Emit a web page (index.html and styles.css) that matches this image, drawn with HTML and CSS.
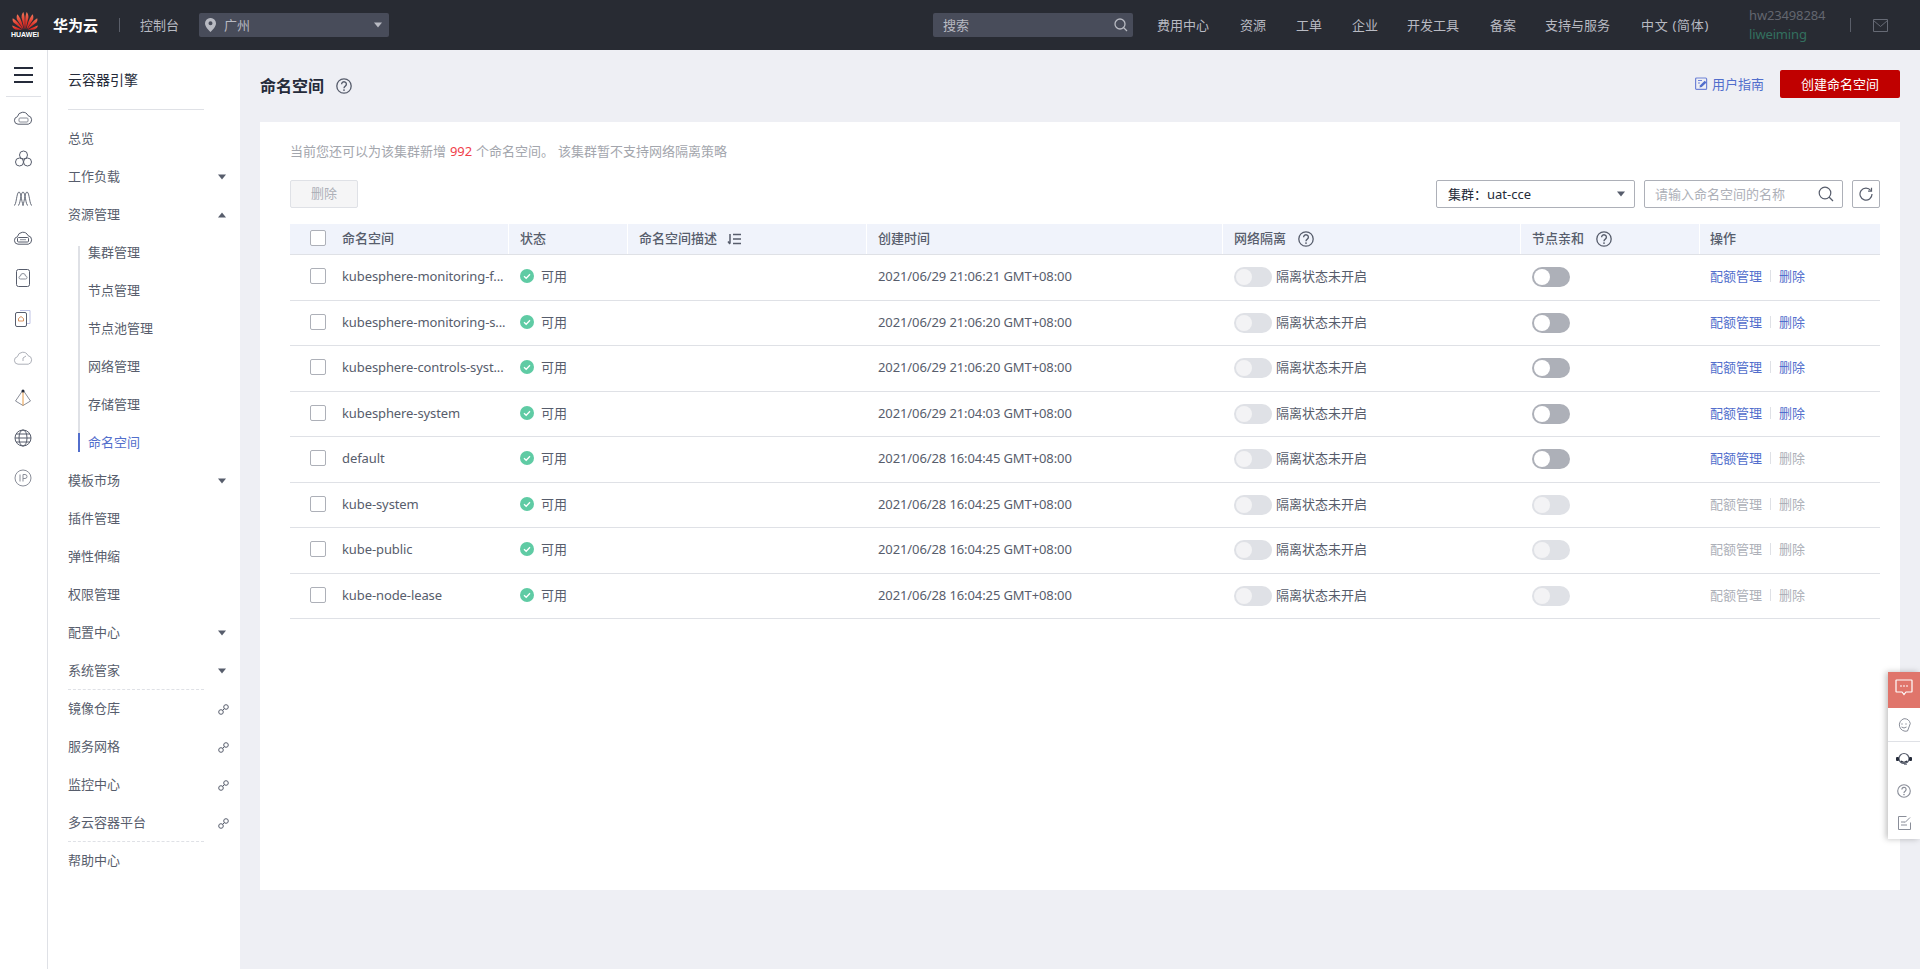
FILE: index.html
```html
<!DOCTYPE html>
<html lang="zh-CN">
<head>
<meta charset="utf-8">
<title>命名空间</title>
<link rel="stylesheet" href="styles.css">
</head>
<body>
<svg class="defs" width="0" height="0" aria-hidden="true">
  <defs>
    <linearGradient id="petal" x1="0" y1="0" x2="0" y2="1">
      <stop offset="0" stop-color="#f0785a"/>
      <stop offset=".55" stop-color="#e0352b"/>
      <stop offset="1" stop-color="#d8201f"/>
    </linearGradient>
  </defs>
  <symbol id="caret" viewBox="0 0 8 6"><path d="M0 .5h8L4 5.500z" fill="currentColor"/></symbol>
  <symbol id="help" viewBox="0 0 16 16"><circle cx="8" cy="8" r="7.200" fill="none" stroke="currentColor" stroke-width="1.300"/><path d="M5.600 6.200a2.400 2.400 0 1 1 3.700 2c-.9.600-1.300 1-1.300 2" fill="none" stroke="currentColor" stroke-width="1.400"/><circle cx="8" cy="12.100" r=".9" fill="currentColor"/></symbol>
  <symbol id="ok" viewBox="0 0 14 14"><circle cx="7" cy="7" r="7" fill="#5fcba4"/><path d="M4 7.200l2.200 2.100L10 5.300" fill="none" stroke="#fff" stroke-width="1.300"/></symbol>
  <symbol id="link" viewBox="0 0 11 11"><circle cx="3" cy="8" r="2.300" fill="none" stroke="currentColor"/><circle cx="8" cy="3" r="2.300" fill="none" stroke="currentColor"/><path d="M4.500 6.500l2-2" stroke="currentColor"/></symbol>
  <symbol id="cloud" viewBox="0 0 20 14"><path d="M5 13.200a3.800 3.800 0 0 1-.6-7.500A5.600 5.600 0 0 1 15 4.600a4.400 4.400 0 0 1 .3 8.600z" fill="none" stroke="currentColor"/></symbol>
</svg>

<header class="topbar">
  <div class="brand">
    <div class="logo">
      <svg width="26" height="18" viewBox="0 0 26 18" aria-hidden="true">
        <g fill="url(#petal)">
          <path d="M12.400 17.500 9.600 5.500C9.400 3 10.400 1.300 11.300 0c1.300 2.500 1.900 9.500 1.100 17.500z"/>
          <path d="M13.600 17.500 16.400 5.500C16.600 3 15.600 1.300 14.700 0c-1.300 2.500-1.900 9.500-1.100 17.500z"/>
          <path d="M11.500 17.500 5 7.500C4.300 5.500 4.700 3.500 5.400 2.300 7.500 4.500 10.700 11 11.500 17.500z"/>
          <path d="M14.500 17.500 21 7.500C21.700 5.500 21.300 3.500 20.600 2.300 18.500 4.500 15.300 11 14.500 17.500z"/>
          <path d="M10.700 17.500 1.500 10.500C.4 9 .4 7.500.8 6.300 3.500 8 8.700 13 10.700 17.500z"/>
          <path d="M15.300 17.500 24.500 10.500C25.600 9 25.600 7.500 25.200 6.300 22.500 8 17.300 13 15.300 17.500z"/>
          <path d="M10.200 17.800 .4 13.400C-.1 14.800 1.400 16.800 3.500 17.400 5.500 17.900 8 17.900 10.200 17.800z"/>
          <path d="M15.800 17.800 25.600 13.400C26.100 14.800 24.600 16.800 22.500 17.400 20.500 17.900 18 17.900 15.800 17.800z"/>
        </g>
      </svg>
      <span class="logo-text">HUAWEI</span>
    </div>
    <span class="brand-name">华为云</span>
    <span class="brand-sep"></span>
    <span class="console">控制台</span>
    <div class="region">
      <svg width="11" height="14" viewBox="0 0 11 14" aria-hidden="true"><path fill-rule="evenodd" d="M5.500 0A5.300 5.300 0 0 1 11 5.200C11 8.500 7.500 12 5.500 14 3.500 12 0 8.500 0 5.200A5.300 5.300 0 0 1 5.500 0zm0 3.300a2 2 0 1 0 0 4 2 2 0 0 0 0-4z" fill="#b8bac2"/></svg>
      <span class="region-name">广州</span>
      <svg class="caret region-caret"><use href="#caret"/></svg>
    </div>
  </div>
  <div class="top-right">
    <div class="top-search">
      <span>搜索</span>
      <svg width="14" height="14" viewBox="0 0 14 14" aria-hidden="true"><circle cx="6" cy="6" r="5" fill="none" stroke="#b8bac2" stroke-width="1.300"/><path d="M9.500 9.500l3.500 3.500" stroke="#b8bac2" stroke-width="1.300"/></svg>
    </div>
    <nav class="top-nav">
      <a class="w-cost">费用中心</a>
      <a class="w-res">资源</a>
      <a class="w-res">工单</a>
      <a class="w-ent">企业</a>
      <a class="w-dev">开发工具</a>
      <a class="w-rec">备案</a>
      <a class="w-sup">支持与服务</a>
      <a class="w-lang">中文 (简体)</a>
    </nav>
    <div class="account">
      <span class="acc-id">hw23498284</span>
      <span class="acc-name">liweiming</span>
    </div>
    <span class="acc-sep"></span>
    <svg class="mail" width="15" height="13" viewBox="0 0 15 13" aria-hidden="true"><path d="M.5.500h14v12H.5zM.5 1.500l7 6 7-6" fill="none" stroke="#666a75"/></svg>
  </div>
</header>

<div class="shell">
  <aside class="rail">
    <div class="burger"><i></i><i></i><i></i></div>
    <ul class="rail-list">
      <li><svg width="20" height="14" viewBox="0 0 20 14" class="ri"><use href="#cloud" width="20" height="14"/><rect x="6" y="7" width="9" height="4" rx="1" fill="none" stroke="#8a8e99"/></svg></li>
      <li><svg width="17" height="17" viewBox="0 0 17 17" class="ri"><g fill="none" stroke="currentColor"><circle cx="8.500" cy="5" r="4"/><circle cx="4.500" cy="12" r="4"/><circle cx="12.500" cy="12" r="4"/></g></svg></li>
      <li><svg width="20" height="15" viewBox="0 0 20 15" class="ri"><path d="M1 14.500C3.500 14.500 3.500 1 6 1s2.500 13.500 5 13.500M5 14.500C7.500 14.500 7.500 1 10 1s2.500 13.500 5 13.500M9 14.500C11.500 14.500 11.500 1 14 1s2.500 13.500 5 13.500" fill="none" stroke="currentColor" stroke-width=".9"/></svg></li>
      <li><svg width="20" height="14" viewBox="0 0 20 14" class="ri"><use href="#cloud" width="20" height="14"/><rect x="4.500" y="6.500" width="11" height="4.500" rx="1" fill="none" stroke="currentColor"/><path d="M7 8.700h6" stroke="#8a8e99"/></svg></li>
      <li><svg width="14" height="18" viewBox="0 0 14 18" class="ri"><rect x=".5" y=".5" width="13" height="17" rx="2" fill="none" stroke="currentColor"/><path d="M4.500 10h5a1.500 1.500 0 0 0 0-3 2.500 2.500 0 0 0-5 0 1.500 1.500 0 0 0 0 3z" fill="none" stroke="#8a8e99"/></svg></li>
      <li><svg width="16" height="18" viewBox="0 0 16 18" class="ri"><path d="M5 1.500h10v13h-3" fill="none" stroke="#bfc3e6"/><rect x=".5" y="3.500" width="11" height="14" rx="1.500" fill="none" stroke="currentColor"/><path d="M3.500 12h5V9.500L6 7.500 3.500 9.500z" fill="none" stroke="#d9925e"/></svg></li>
      <li class="rail-dim"><svg width="20" height="14" viewBox="0 0 20 14" class="ri"><use href="#cloud" width="20" height="14"/><path d="M10 10V7l3-2" fill="none" stroke="#adb0b8"/></svg></li>
      <li><svg width="18" height="18" viewBox="0 0 18 18" class="ri"><path d="M9 1 1.500 12 9 16.500 16.500 12z" fill="none" stroke="#8a8e99"/><path d="M9 1v15.500" stroke="#e69a45"/><circle cx="9" cy="2" r="1.500" fill="#252b3a"/></svg></li>
      <li><svg width="18" height="18" viewBox="0 0 18 18" class="ri"><g fill="none" stroke="currentColor"><circle cx="9" cy="9" r="8"/><ellipse cx="9" cy="9" rx="4" ry="8"/><path d="M1 9h16M2 5h14M2 13h14"/></g></svg></li>
      <li><svg width="18" height="18" viewBox="0 0 18 18" class="ri"><circle cx="9" cy="9" r="8" fill="none" stroke="#8a8e99"/><path d="M6 5.500v7M9 12.500v-7h2a2 2 0 0 1 0 4H9" fill="none" stroke="#8a8e99"/></svg></li>
    </ul>
  </aside>

  <aside class="sidenav">
    <div class="side-title">云容器引擎</div>
    <ul class="menu">
      <li class="item">总览</li>
      <li class="item">工作负载<svg class="caret"><use href="#caret"/></svg></li>
      <li class="item">资源管理<svg class="caret up"><use href="#caret"/></svg></li>
      <li>
        <ul class="submenu">
          <li class="item sub">集群管理</li>
          <li class="item sub">节点管理</li>
          <li class="item sub">节点池管理</li>
          <li class="item sub">网络管理</li>
          <li class="item sub">存储管理</li>
          <li class="item sub active">命名空间</li>
        </ul>
      </li>
      <li class="item">模板市场<svg class="caret"><use href="#caret"/></svg></li>
      <li class="item">插件管理</li>
      <li class="item">弹性伸缩</li>
      <li class="item">权限管理</li>
      <li class="item">配置中心<svg class="caret"><use href="#caret"/></svg></li>
      <li class="item dashed">系统管家<svg class="caret"><use href="#caret"/></svg></li>
      <li class="item">镜像仓库<svg class="ext"><use href="#link"/></svg></li>
      <li class="item">服务网格<svg class="ext"><use href="#link"/></svg></li>
      <li class="item">监控中心<svg class="ext"><use href="#link"/></svg></li>
      <li class="item dashed">多云容器平台<svg class="ext"><use href="#link"/></svg></li>
      <li class="item">帮助中心</li>
    </ul>
  </aside>

  <main class="content">
    <div class="page-head">
      <h1 class="page-title">命名空间</h1>
      <svg class="help title-help"><use href="#help"/></svg>
      <a class="guide">
        <svg width="13" height="13" viewBox="0 0 13 13" aria-hidden="true"><rect x=".6" y="1" width="11" height="11.400" rx="1" fill="none" stroke="#6f83d6" stroke-width="1.200"/><path d="M3 3.500h4M3 6h2" stroke="#6f83d6"/><path d="M4.500 10.500l.6-2.300 4.600-4.400 1.800 1.700-4.700 4.400z" fill="#526ecc"/></svg>
        用户指南
      </a>
      <button class="btn-primary">创建命名空间</button>
    </div>

    <section class="card">
      <p class="notice">当前您还可以为该集群新增 <em>992</em> 个命名空间。 该集群暂不支持网络隔离策略</p>
      <div class="toolbar">
        <button class="btn-disabled">删除</button>
        <div class="select"><span>集群：uat-cce</span><svg class="caret"><use href="#caret"/></svg></div>
        <div class="search">
          <span>请输入命名空间的名称</span>
          <svg width="16" height="16" viewBox="0 0 16 16" aria-hidden="true"><circle cx="7" cy="7" r="5.800" fill="none" stroke="#575d6c" stroke-width="1.200"/><path d="M11 11l4 4" stroke="#575d6c" stroke-width="1.200"/></svg>
        </div>
        <button class="btn-refresh" aria-label="刷新"><svg width="14" height="14" viewBox="0 0 14 14"><path d="M11.800 3.500A6 6 0 1 0 13 7" fill="none" stroke="#575d6c" stroke-width="1.200"/><path d="M12.500 .8v3.400H9.100" fill="none" stroke="#575d6c" stroke-width="1.200"/></svg></button>
      </div>

      <table class="grid">
        <thead>
          <tr class="row head">
            <th class="c-name"><span class="check"></span>命名空间</th>
            <th>状态</th>
            <th>命名空间描述<svg class="sort" width="14" height="12" viewBox="0 0 14 12" aria-hidden="true"><path d="M3 1v9.500M1 8.500l2 2.500M6 1.500h8M6 6h8M6 10.500h8" fill="none" stroke="#575d6c" stroke-width="1.500"/></svg></th>
            <th>创建时间</th>
            <th>网络隔离<svg class="help"><use href="#help"/></svg></th>
            <th>节点亲和<svg class="help"><use href="#help"/></svg></th>
            <th>操作</th>
          </tr>
        </thead>
        <tbody>
          <tr class="row">
            <td class="c-name"><span class="check"></span><span class="name">kubesphere-monitoring-f...</span></td>
            <td><svg class="ok"><use href="#ok"/></svg>可用</td><td></td>
            <td class="latin">2021/06/29 21:06:21 GMT+08:00</td>
            <td><span class="toggle off"></span>隔离状态未开启</td>
            <td><span class="toggle on"></span></td>
            <td class="ops"><a>配额管理</a><i></i><a>删除</a></td>
          </tr>
          <tr class="row">
            <td class="c-name"><span class="check"></span><span class="name">kubesphere-monitoring-s...</span></td>
            <td><svg class="ok"><use href="#ok"/></svg>可用</td><td></td>
            <td class="latin">2021/06/29 21:06:20 GMT+08:00</td>
            <td><span class="toggle off"></span>隔离状态未开启</td>
            <td><span class="toggle on"></span></td>
            <td class="ops"><a>配额管理</a><i></i><a>删除</a></td>
          </tr>
          <tr class="row">
            <td class="c-name"><span class="check"></span><span class="name">kubesphere-controls-syst...</span></td>
            <td><svg class="ok"><use href="#ok"/></svg>可用</td><td></td>
            <td class="latin">2021/06/29 21:06:20 GMT+08:00</td>
            <td><span class="toggle off"></span>隔离状态未开启</td>
            <td><span class="toggle on"></span></td>
            <td class="ops"><a>配额管理</a><i></i><a>删除</a></td>
          </tr>
          <tr class="row">
            <td class="c-name"><span class="check"></span><span class="name">kubesphere-system</span></td>
            <td><svg class="ok"><use href="#ok"/></svg>可用</td><td></td>
            <td class="latin">2021/06/29 21:04:03 GMT+08:00</td>
            <td><span class="toggle off"></span>隔离状态未开启</td>
            <td><span class="toggle on"></span></td>
            <td class="ops"><a>配额管理</a><i></i><a>删除</a></td>
          </tr>
          <tr class="row">
            <td class="c-name"><span class="check"></span><span class="name">default</span></td>
            <td><svg class="ok"><use href="#ok"/></svg>可用</td><td></td>
            <td class="latin">2021/06/28 16:04:45 GMT+08:00</td>
            <td><span class="toggle off"></span>隔离状态未开启</td>
            <td><span class="toggle on"></span></td>
            <td class="ops"><a>配额管理</a><i></i><a class="dis">删除</a></td>
          </tr>
          <tr class="row">
            <td class="c-name"><span class="check"></span><span class="name">kube-system</span></td>
            <td><svg class="ok"><use href="#ok"/></svg>可用</td><td></td>
            <td class="latin">2021/06/28 16:04:25 GMT+08:00</td>
            <td><span class="toggle off"></span>隔离状态未开启</td>
            <td><span class="toggle off"></span></td>
            <td class="ops"><a class="dis">配额管理</a><i></i><a class="dis">删除</a></td>
          </tr>
          <tr class="row">
            <td class="c-name"><span class="check"></span><span class="name">kube-public</span></td>
            <td><svg class="ok"><use href="#ok"/></svg>可用</td><td></td>
            <td class="latin">2021/06/28 16:04:25 GMT+08:00</td>
            <td><span class="toggle off"></span>隔离状态未开启</td>
            <td><span class="toggle off"></span></td>
            <td class="ops"><a class="dis">配额管理</a><i></i><a class="dis">删除</a></td>
          </tr>
          <tr class="row">
            <td class="c-name"><span class="check"></span><span class="name">kube-node-lease</span></td>
            <td><svg class="ok"><use href="#ok"/></svg>可用</td><td></td>
            <td class="latin">2021/06/28 16:04:25 GMT+08:00</td>
            <td><span class="toggle off"></span>隔离状态未开启</td>
            <td><span class="toggle off"></span></td>
            <td class="ops"><a class="dis">配额管理</a><i></i><a class="dis">删除</a></td>
          </tr>
        </tbody>
      </table>
    </section>
  </main>
</div>

<div class="float-bar">
  <div class="fb-red"><svg width="18" height="17" viewBox="0 0 18 17" aria-hidden="true"><path d="M1.500 1h15a.5.500 0 0 1 .5.500v11a.5.500 0 0 1-.5.500H11l-2 2.500L7 13H1.500a.5.500 0 0 1-.5-.500v-11a.5.500 0 0 1 .5-.500z" fill="none" stroke="#fff" stroke-width="1.200"/><path d="M5 7h2M8 7h2M11 7h2" stroke="#fff" stroke-width="1.200"/></svg></div>
  <div class="fb-cell tall"><svg width="14" height="14" viewBox="0 0 14 14" aria-hidden="true"><path d="M7 .7a6.300 6.300 0 0 1 6.300 4.800L10.500 13A6.300 6.300 0 1 1 7 .7z" fill="none" stroke="#8a8e99"/><circle cx="5" cy="6" r=".7" fill="#8a8e99"/><circle cx="9" cy="6" r=".7" fill="#8a8e99"/><path d="M4.500 9q2.500 2 5 0" fill="none" stroke="#8a8e99"/></svg></div>
  <div class="fb-cell line"><svg width="16" height="14" viewBox="0 0 16 14" aria-hidden="true"><circle cx="8" cy="6.500" r="5" fill="none" stroke="#575d6c" stroke-width="1.200"/><rect x="0" y="5" width="3" height="4" rx="1" fill="#252b3a"/><rect x="13" y="5" width="3" height="4" rx="1" fill="#252b3a"/><path d="M5 9q3 2.500 6 0" fill="none" stroke="#252b3a" stroke-width="1.200"/><path d="M8 12.500h3" stroke="#8a8e99"/></svg></div>
  <div class="fb-cell"><svg class="fb-help"><use href="#help"/></svg></div>
  <div class="fb-cell"><svg width="13" height="14" viewBox="0 0 13 14" aria-hidden="true"><path d="M12.500 6.500v7H.5V.5h8M3 6h4M3 9h6M7 6.500l5-5" fill="none" stroke="#8a8e99"/></svg></div>
</div>
</body>
</html>
```

FILE: styles.css
```css
* { box-sizing: border-box; }
html, body { margin: 0; height: 100%; }
body {
  height: 969px;
  overflow: hidden;
  background: #eeeff4;
  color: #575d6c;
  font: 13px/20px "Noto Sans", "Noto Sans CJK SC", sans-serif;
  display: flex;
  flex-direction: column;
}
ul { list-style: none; margin: 0; padding: 0; }
a { color: inherit; text-decoration: none; }
button { font: inherit; padding: 0; }
.defs { position: absolute; }
.caret { width: 8px; height: 6px; color: #575d6c; display: block; }
.caret.up { transform: rotate(180deg); }

/* top bar */
.topbar {
  height: 50px;
  flex: none;
  background: #282b33;
  display: flex;
  justify-content: space-between;
  align-items: center;
  color: #b8bac2;
}
.brand { display: flex; align-items: center; }
.logo {
  width: 26px;
  margin-left: 12px;
  display: flex;
  flex-direction: column;
  align-items: center;
}
.logo svg { display: block; }
.logo-text {
  font: 700 7px/9px "Liberation Sans", sans-serif;
  color: #fff;
  white-space: nowrap;
}
.brand-name { margin-left: 15px; color: #fff; font-size: 15px; font-weight: 700; }
.brand-sep { width: 1px; height: 14px; background: #5a5e69; margin-left: 21px; }
.console { margin-left: 20px; }
.region {
  width: 190px;
  height: 24px;
  margin-left: 20px;
  padding: 0 7px 0 6px;
  border-radius: 2px;
  background: #484c5a;
  display: flex;
  align-items: center;
}
.region-name { margin-left: 8px; flex: 1; }
.region-caret { color: #b8bac2; }

.top-right { display: flex; align-items: center; }
.top-search {
  width: 200px;
  height: 24px;
  padding: 0 5px 0 10px;
  border-radius: 2px;
  background: #484c5a;
  display: flex;
  justify-content: space-between;
  align-items: center;
}
.top-nav { display: flex; margin-left: 24px; white-space: nowrap; }
.w-cost { width: 83px; }
.w-res { width: 56px; }
.w-ent { width: 55px; }
.w-dev { width: 83px; }
.w-rec { width: 55px; }
.w-sup { width: 96px; }
.w-lang { width: 108px; letter-spacing: .7px; }
.account { display: flex; flex-direction: column; line-height: 19px; width: 101px; letter-spacing: -.15px; }
.acc-id { color: #63666f; }
.acc-name { color: #33705f; }
.acc-sep { width: 1px; height: 14px; background: #5a5e69; }
.mail { margin: 0 32px 0 22px; }

/* shell */
.shell { flex: 1; display: flex; min-height: 0; }

.rail { width: 48px; flex: none; background: #fff; border-right: 1px solid #dfe1e6; }
.burger {
  height: 47px;
  margin: 0 6px;
  padding: 17px 8px 0;
  border-bottom: 1px solid #dfe1e6;
  display: flex;
  flex-direction: column;
  gap: 5px;
}
.burger i { display: block; height: 2px; background: #252b3a; }
.rail-list { margin-top: 1px; }
.rail-list li { height: 40px; display: flex; justify-content: center; align-items: center; padding-right: 1px; }
.ri { color: #575d6c; }
.rail-dim .ri { color: #adb0b8; }

.sidenav { width: 192px; flex: none; background: #fff; padding-left: 20px; }
.side-title {
  width: 136px;
  height: 60px;
  padding-top: 20px;
  font-size: 14px;
  color: #252b3a;
  border-bottom: 1px solid #dfe1e6;
}
.menu { margin-top: 10px; }
.item {
  height: 38px;
  padding: 0 14px 2px 0;
  display: flex;
  justify-content: space-between;
  align-items: center;
  position: relative;
}
.item .caret { margin-top: 2px; }
.item .ext { width: 11px; height: 11px; color: #575d6c; margin: 2px -3px 0 0; }
.item.dashed::after {
  content: "";
  position: absolute;
  left: 0;
  bottom: 0;
  width: 136px;
  border-bottom: 1px dashed #dfe1e6;
}
.submenu { position: relative; }
.submenu::before {
  content: "";
  position: absolute;
  left: 10px;
  top: 12px;
  bottom: 29px;
  width: 2px;
  background: #dfe1e6;
}
.sub { padding-left: 20px; }
.sub.active { color: #526ecc; }
.sub.active::before {
  content: "";
  position: absolute;
  left: 10px;
  top: 9px;
  height: 19px;
  width: 2px;
  background: #526ecc;
}

/* main */
.content { flex: 1; min-width: 0; padding: 0 20px; }
.page-head { height: 72px; display: flex; align-items: center; }
.page-title { margin: 0; font-size: 16px; font-weight: 700; color: #252b3a; line-height: 24px; }
.help { width: 16px; height: 16px; color: #575d6c; margin-left: 12px; flex: none; }
.guide {
  margin-left: auto;
  margin-top: -5px;
  color: #526ecc;
  display: flex;
  align-items: center;
  gap: 4px;
}
.btn-primary {
  width: 120px;
  height: 28px;
  margin: -4px 0 0 16px;
  padding-bottom: 1px;
  border: 0;
  border-radius: 2px;
  background: #c00000;
  color: #fff;
}
.card {
  height: 768px;
  background: #fff;
  padding: 19px 20px 0 30px;
}
.notice { margin: 0; color: #a3a6ad; word-spacing: .5px; }
.notice em { font-style: normal; color: #f0404a; }
.toolbar { margin-top: 19px; height: 28px; display: flex; align-items: stretch; }
.btn-disabled {
  width: 68px;
  margin-right: auto;
  padding-bottom: 2px;
  border: 1px solid #dfe1e6;
  border-radius: 2px;
  background: #f5f5f6;
  color: #adb0b8;
}
.select {
  width: 199px;
  padding: 0 9px 1px 11px;
  border: 1px solid #adb0b8;
  border-radius: 2px;
  color: #252b3a;
  display: flex;
  justify-content: space-between;
  align-items: center;
}
.search {
  width: 199px;
  margin-left: 9px;
  padding: 0 8px 1px 10px;
  border: 1px solid #adb0b8;
  border-radius: 2px;
  color: #adb0b8;
  display: flex;
  justify-content: space-between;
  align-items: center;
}
.btn-refresh {
  width: 28px;
  margin-left: 9px;
  border: 1px solid #adb0b8;
  border-radius: 2px;
  background: #fff;
  display: flex;
  justify-content: center;
  align-items: center;
}

/* table */
.grid { display: block; margin-top: 16px; border-collapse: collapse; }
.grid thead, .grid tbody { display: block; }
.row {
  display: grid;
  grid-template-columns: 219px 119px 239px 356px 298px 179px 180px;
  height: 45.5px;
  border-bottom: 1px solid #dfe1e6;
}
.row.head { height: 31px; background: #f0f3fb; }
.row > * {
  min-width: 0;
  padding: 0 0 2px 11px;
  display: flex;
  align-items: center;
  font-weight: 400;
  white-space: nowrap;
}
.row.head > * { font-weight: 500; border-right: 1px solid #fff; }
.row.head > *:last-child { border-right: 0; padding-left: 10px; }
.row > .c-name { padding-left: 20px; }
.row.head .help, .row.head .sort { margin-top: 2px; }
.check {
  width: 16px;
  height: 16px;
  flex: none;
  margin-right: 16px;
  border: 1px solid #adb0b8;
  border-radius: 2px;
  background: #fff;
}
.name { letter-spacing: -.1px; }
.latin { letter-spacing: -.1px; }
.ok { width: 14px; height: 14px; margin-right: 7px; flex: none; }
.sort { margin-left: 10px; }
.toggle {
  width: 38px;
  height: 20px;
  margin: 2px 4px 0 0;
  flex: none;
  border-radius: 10px;
  padding: 2px;
  display: block;
}
.toggle::after {
  content: "";
  display: block;
  width: 16px;
  height: 16px;
  border-radius: 50%;
}
.toggle.off { background: #dfe1e6; }
.toggle.off::after { background: #f3f3f5; }
.toggle.on { background: #adb0b8; }
.toggle.on::after { background: #fff; }
.ops { color: #526ecc; }
.row > .ops { padding-left: 10px; }
.ops i { width: 1px; height: 12px; margin: 0 8px; background: #dfe1e6; }
.ops .dis { color: #adb0b8; }

/* floating bar */
.float-bar {
  position: absolute;
  right: 0;
  top: 672px;
  width: 32px;
  height: 167px;
  background: #fff;
  box-shadow: -2px 0 6px rgba(0, 0, 0, .25);
}
.fb-red { height: 36px; padding-bottom: 6px; background: #e0756b; display: flex; justify-content: center; align-items: center; }
.fb-cell { height: 32px; display: flex; justify-content: center; align-items: center; }
.fb-cell.tall { height: 33px; }
.fb-cell.line { border-top: 1px solid #dfe1e6; height: 34px; }
.fb-help { width: 14px; height: 14px; color: #8a8e99; }
```
